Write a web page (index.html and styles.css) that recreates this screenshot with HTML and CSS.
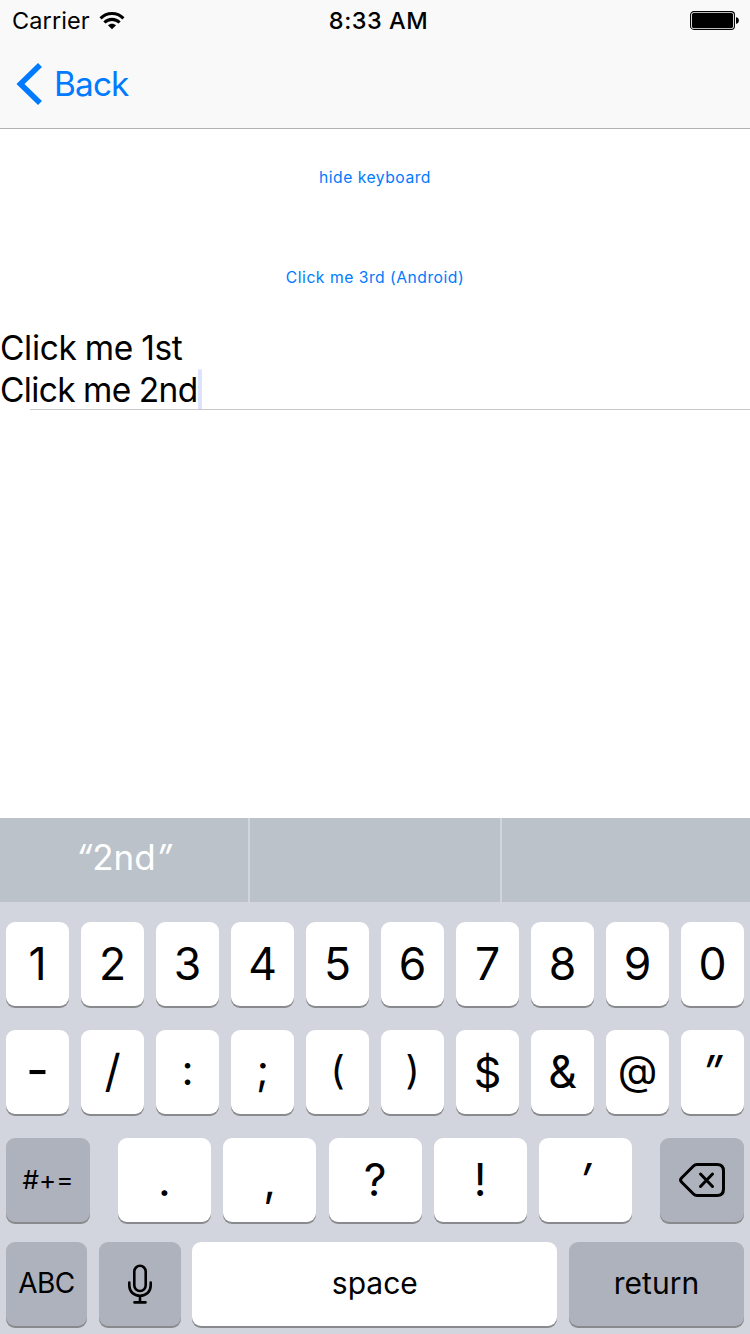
FILE: index.html
```html
<!DOCTYPE html>
<html lang="en">
<head>
<meta charset="utf-8">
<title>Hide keyboard</title>
<link rel="stylesheet" href="styles.css">
</head>
<body>
<div class="screen">
  <header class="header">
    <div class="status">
      <div class="status-left">
        <span class="carrier">Carrier</span>
        <svg class="wifi" width="26" height="20" viewBox="0 0 26 20" fill="none" stroke="#000" stroke-width="3.1">
          <path d="M1.6 7.4C8 .9 18 .9 24.4 7.4"/>
          <path d="M5.4 11.5C9.8 7.3 16.2 7.3 20.6 11.500"/>
          <path d="M13 18.200L8.900 14.200C11.200 12.100 14.800 12.100 17.100 14.200Z" fill="#000" stroke="none"/>
        </svg>
      </div>
      <span class="time">8:33 AM</span>
      <svg class="battery" width="50" height="20" viewBox="0 0 50 20">
        <rect x=".6" y=".6" width="43.8" height="17.8" rx="3.2" fill="#fff" stroke="#000" stroke-width="1.1"/>
        <rect x="2" y="2" width="41" height="15" rx="1.6"/>
        <path d="M46 6.2C49.8 6.2 49.8 12.8 46 12.8Z"/>
      </svg>
    </div>
    <nav class="nav">
      <svg class="chevron" width="26" height="42" viewBox="0 0 26 42" fill="none" stroke="#007aff" stroke-width="5.6">
        <path d="M24 2L4.500 21L24 40"/>
      </svg>
      <span class="back">Back</span>
    </nav>
  </header>
  <main class="content">
    <button class="action hide">hide keyboard</button>
    <button class="action third">Click me 3rd (Android)</button>
    <div class="field">Click me 1st</div>
    <div class="field entry"><span>Click me 2nd</span><i class="caret"></i></div>
  </main>
  <section class="keyboard">
    <div class="suggestions">
      <div class="suggestion first"><i>“</i>2nd<i>”</i></div>
      <div class="suggestion"></div>
      <div class="suggestion"></div>
    </div>
    <div class="rows">
      <div class="row"><b class="key">1</b><b class="key">2</b><b class="key">3</b><b class="key">4</b><b class="key">5</b><b class="key">6</b><b class="key">7</b><b class="key">8</b><b class="key">9</b><b class="key">0</b></div>
      <div class="row"><b class="key hyphen">-</b><b class="key slash">/</b><b class="key colon">:</b><b class="key semicolon">;</b><b class="key paren">(</b><b class="key paren">)</b><b class="key dollar">$</b><b class="key">&amp;</b><b class="key at">@</b><b class="key quote">”</b></div>
      <div class="row punctuation">
        <b class="key dark symbols">#+=</b>
        <div class="marks"><b class="key">.</b><b class="key">,</b><b class="key">?</b><b class="key">!</b><b class="key quote">’</b></div>
        <b class="key dark">
          <svg width="48" height="36" viewBox="0 0 48 36" fill="none" stroke="#000" stroke-width="3" stroke-linejoin="round" stroke-linecap="round">
            <path d="M19 2.500H39Q45.500 2.500 45.500 9V27Q45.500 33.500 39 33.500H19Q17 33.500 15.500 32L3.500 20Q1.500 18 3.500 16L15.500 4Q17 2.500 19 2.500Z"/>
            <path d="M22.500 12L34.500 24.500M34.500 12L22.500 24.500"/>
          </svg>
        </b>
      </div>
      <div class="bottom">
        <b class="key dark abc">ABC</b>
        <b class="key dark">
          <svg width="26" height="40" viewBox="0 0 26 40" fill="none" stroke="#000" stroke-width="2.600" stroke-linecap="round">
            <rect x="7.300" y="1.800" width="11.400" height="25.200" rx="5.700"/>
            <path d="M2.300 18.500V21.500C2.300 27.800 7 31.800 13 31.800S23.700 27.800 23.700 21.500V18.500M13 32V38.500M7.500 38.400H18.500"/>
          </svg>
        </b>
        <b class="key word space">space</b>
        <b class="key dark word">return</b>
      </div>
    </div>
  </section>
</div>
</body>
</html>
```
FILE: styles.css
```css
* { box-sizing: border-box; }
body { margin: 0; font-family: Inter, "Liberation Sans", sans-serif; color: #000; background: #fff; }
svg { display: block; flex: none; }
.screen { width: 750px; height: 1334px; display: flex; flex-direction: column; overflow: hidden; white-space: nowrap; }
.header { height: 129px; background: #f9f9f9; border-bottom: 1px solid #b2b2b2; }
.status { height: 40px; padding: 0 10px 0 12px; display: grid; grid-template-columns: 1fr auto 1fr; align-items: center; font-size: 23.5px; line-height: 41px; }
.status-left { display: flex; align-items: center; gap: 9px; }
.carrier { letter-spacing: .1px; }
.time { font-weight: 550; letter-spacing: .5px; padding-left: 5px; }
.battery { justify-self: end; margin-top: 1px; }
.nav { height: 88px; padding-left: 16px; display: flex; align-items: center; gap: 12px; }
.back { font-size: 33.3px; color: #007aff; letter-spacing: -.8px; }
.content { height: 689px; display: flex; flex-direction: column; }
.action { height: 40px; padding: 0; border: 0; background: none; color: #007aff; font: 15.7px/41px Inter, sans-serif; letter-spacing: .5px; }
.hide { margin-top: 28px; }
.third { margin: 60px 0 31px; }
.field { height: 40px; font-size: 33.5px; line-height: 41px; letter-spacing: -.35px; word-spacing: -.8px; }
.entry { margin-top: 1px; height: 41px; line-height: 43px; letter-spacing: -.62px; display: flex; background: linear-gradient(#c8c7cc, #c8c7cc) 30px 100% / 720px 1px no-repeat; }
.caret { width: 4px; height: 40px; border-radius: 2px 2px 0 0; background: #dde3fc; }
.keyboard { height: 516px; background: #d2d5dd; }
.suggestions { height: 84px; display: grid; grid-template-columns: 248px 250px 248px; gap: 2px; background: #d2d5dd; }
.suggestion { background: #bbc2ca; color: #fff; font-size: 35px; line-height: 78px; text-align: center; }
.rows { padding: 20px 6px 0; display: flex; flex-direction: column; gap: 24px; }
.row { display: flex; justify-content: space-between; }
.key { width: 63px; height: 84px; display: flex; align-items: center; justify-content: center; border-radius: 9px; background: #fff; box-shadow: 0 2px 0 #898a8d; font-size: 44.5px; font-weight: 400; line-height: 86px; }
.dark { width: 84px; background: #aeb2bd; }
.hyphen { font-size: 50px; padding-bottom: 4px; }
.slash { font-size: 45px; padding-bottom: 2px; }
.colon, .semicolon { font-size: 42px; padding-bottom: 4px; }
.paren { font-size: 39px; padding-bottom: 5px; }
.dollar { font-size: 43px; }
.at { font-size: 41px; padding-bottom: 4px; }
.quote { font-style: italic; }
.marks { width: 514px; display: flex; justify-content: space-between; }
.marks .key { width: 93px; }
.symbols { font-size: 26px; }
.bottom { margin-top: -4px; display: grid; grid-template-columns: 81px 82px 365px 175px; justify-content: space-between; }
.bottom .key { width: auto; }
.abc { font-size: 28px; letter-spacing: -.6px; padding-bottom: 3px; }
.word { font-size: 30px; padding-bottom: 2px; }
```
